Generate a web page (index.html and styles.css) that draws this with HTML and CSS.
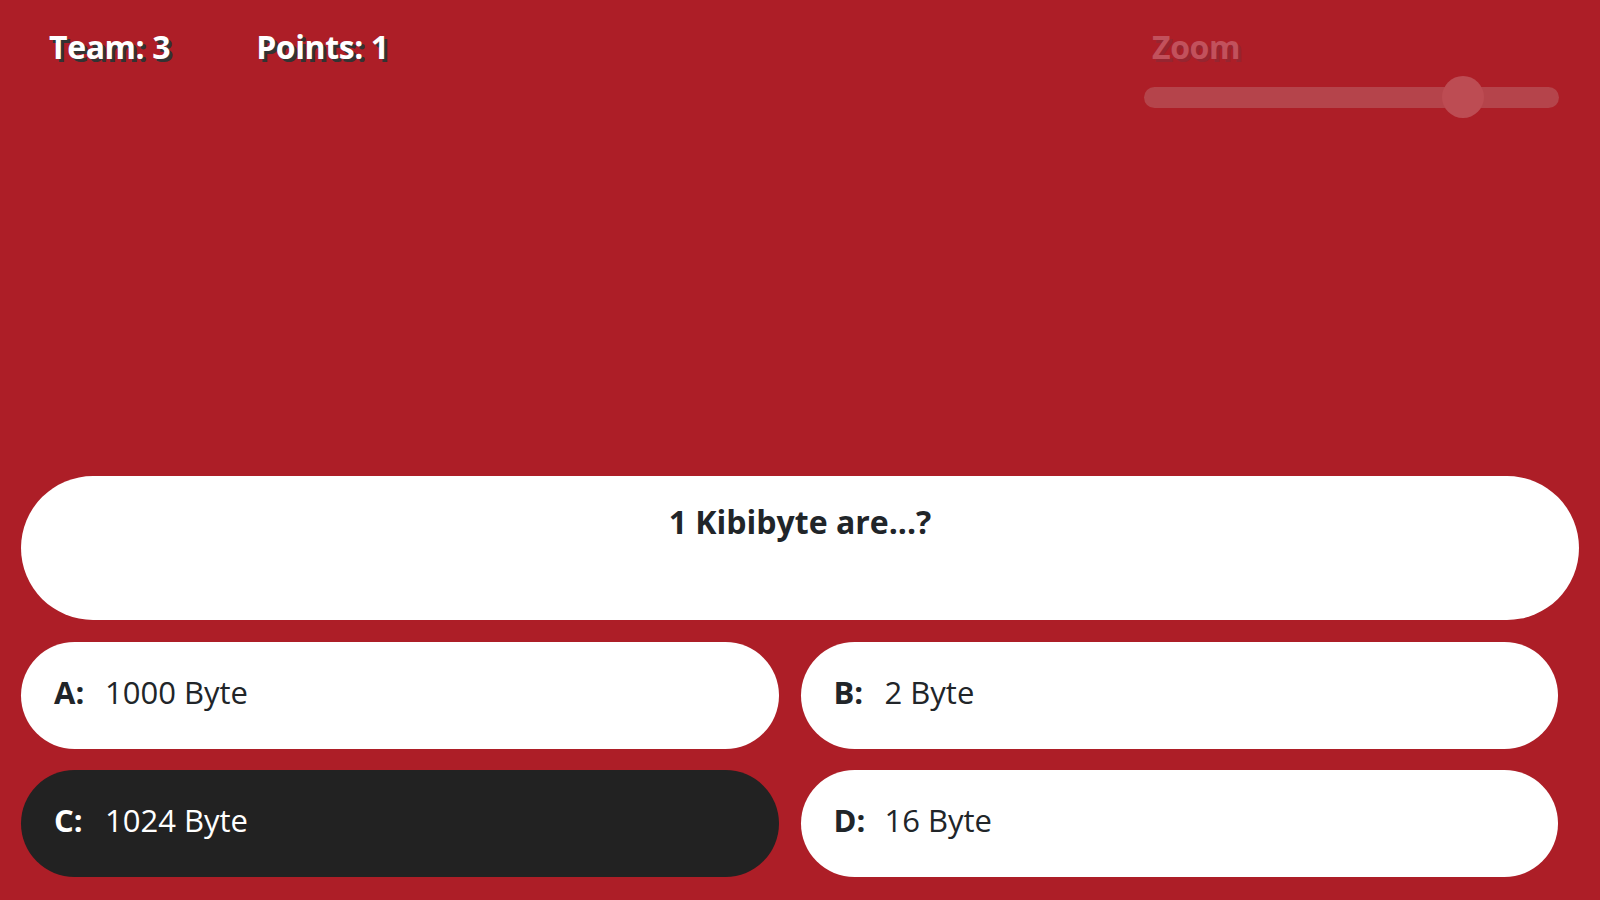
FILE: index.html
```html
<!DOCTYPE html>
<html lang="en">
<head>
<meta charset="utf-8">
<title>Quiz</title>
<link rel="stylesheet" href="styles.css">
</head>
<body>
<div class="screen">
  <header class="topbar">
    <div class="stats">
      <div class="stat">Team: 3</div>
      <div class="stat">Points: 1</div>
    </div>
    <div class="zoom">
      <div class="zoom-label">Zoom</div>
      <input class="zoom-range" type="range" min="0" max="100" value="80">
    </div>
  </header>
  <div class="spacer"></div>
  <div class="question">1 Kibibyte are...?</div>
  <div class="answers">
    <div class="answer"><span class="letter">A:</span><span class="text">1000 Byte</span></div>
    <div class="answer"><span class="letter">B:</span><span class="text">2 Byte</span></div>
    <div class="answer selected"><span class="letter">C:</span><span class="text">1024 Byte</span></div>
    <div class="answer"><span class="letter">D:</span><span class="text">16 Byte</span></div>
  </div>
</div>
</body>
</html>
```

FILE: styles.css
```css
* { box-sizing: border-box; }
html, body {
  margin: 0;
  height: 100%;
}
body {
  background: #ad1e27;
  font-family: "Open Sans", "Noto Sans", sans-serif;
  color: #212529;
  overflow: hidden;
}
.screen {
  height: 900px;
  display: flex;
  flex-direction: column;
  padding: 0 21px 23px 21px;
}
.topbar {
  display: flex;
  justify-content: space-between;
  align-items: flex-start;
  padding: 26px 20px 0 28px;
}
.stats {
  display: flex;
  gap: 86px;
}
.stat, .zoom-label {
  font-size: 32px;
  font-weight: 700;
  color: #fff;
  text-shadow: 3px 3px 0 #333;
  letter-spacing: -0.4px;
  line-height: 42px;
}
.zoom {
  width: 415px;
  display: flex;
  flex-direction: column;
}
.zoom-label {
  padding-left: 8px;
  color: #c2515c;
  text-shadow: 3px 3px 0 #962530;
}
.zoom-range {
  -webkit-appearance: none;
  appearance: none;
  width: 415px;
  height: 42px;
  margin: 0;
  margin-top: 8px;
  background: transparent;
}
.zoom-range::-webkit-slider-runnable-track {
  height: 21px;
  border-radius: 11px;
  background: #b5444b;
}
.zoom-range::-webkit-slider-thumb {
  -webkit-appearance: none;
  width: 42px;
  height: 42px;
  border-radius: 50%;
  background: #bd4c53;
  margin-top: -10.5px;
  border: none;
}
.spacer { flex: 1; }
.question {
  height: 144px;
  border-radius: 72px;
  background: #fff;
  text-align: center;
  font-size: 32px;
  font-weight: 700;
  letter-spacing: 0;
  padding-top: 25px;
  line-height: 42px;
}
.answers {
  margin-top: 22px;
  margin-right: 21px;
  display: grid;
  grid-template-columns: 1fr 1fr;
  column-gap: 22px;
  row-gap: 21px;
}
.answer {
  height: 107px;
  border-radius: 54px;
  background: #fff;
  display: flex;
  align-items: center;
  padding-left: 33px;
  padding-bottom: 7px;
  font-size: 31px;
  line-height: 42px;
}
.answer .letter {
  font-weight: 700;
  width: 51px;
}
.answer .text {
  font-weight: 400;
}
.answer.selected {
  background: #222;
  color: #fff;
}
```
